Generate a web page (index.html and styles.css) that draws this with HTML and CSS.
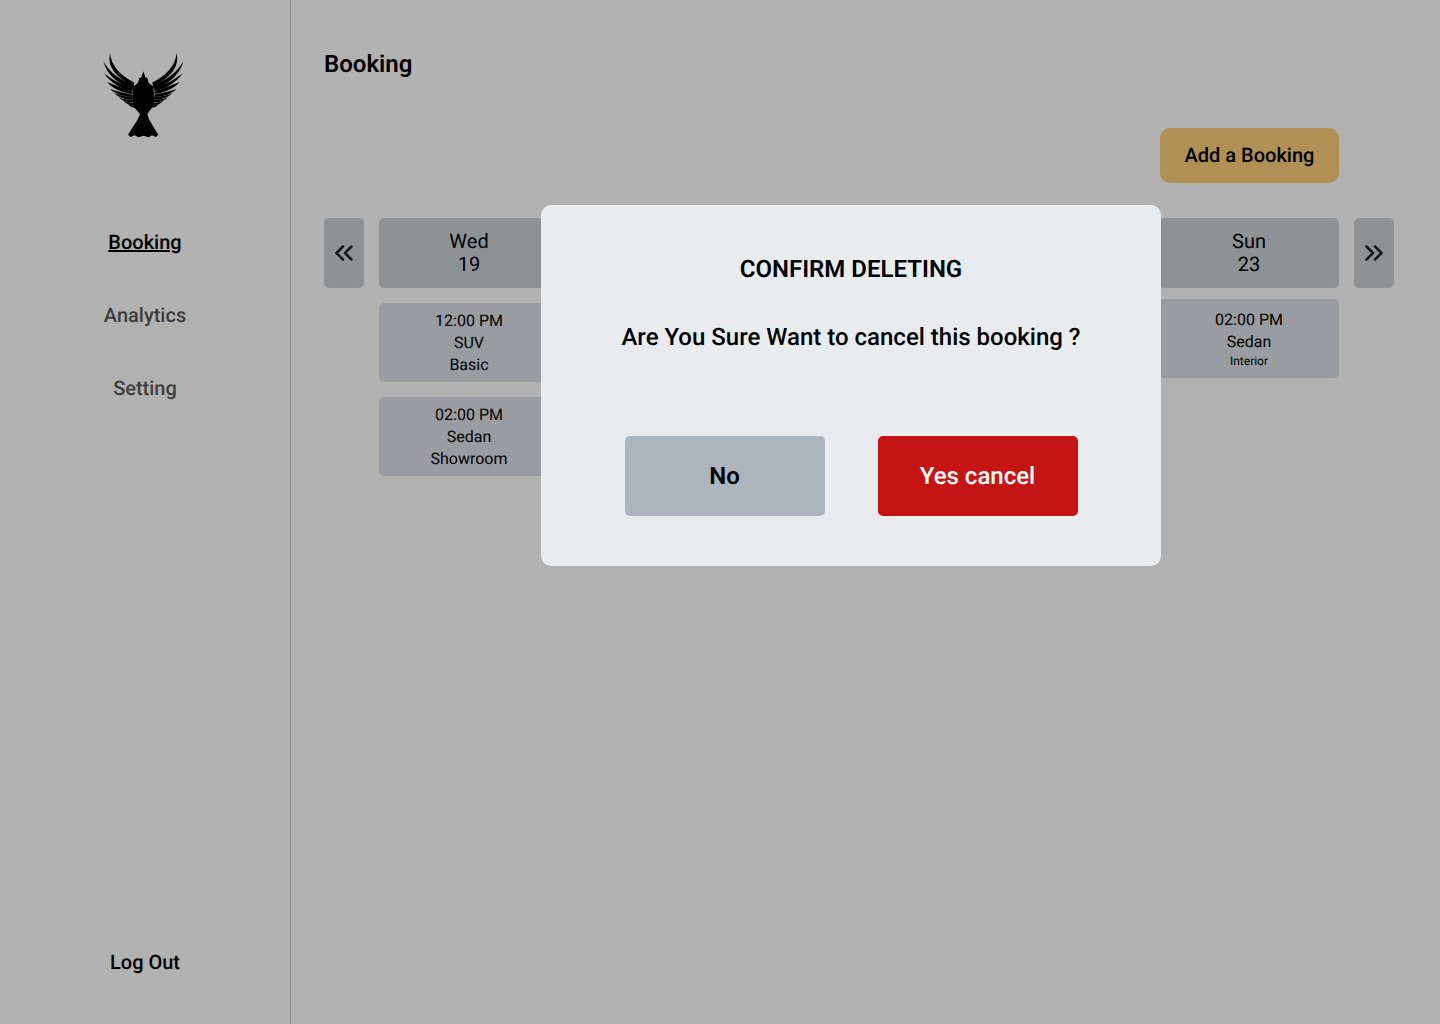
FILE: index.html
```html
<!DOCTYPE html>
<html lang="en">
<head>
    <meta charset="UTF-8">
    <meta name="viewport" content="width=device-width, initial-scale=1.0">
    <title>Booking</title>
    <link rel="stylesheet" href="styles.css">
</head>
<body>

    <div class="layout">
        <!-- Sidebar -->
        <aside class="sidebar">
            <svg class="logo" viewBox="0 0 330 330" aria-label="Logo">
                <!-- body and tail -->
                <path d="M160 94 L166 112 L172 114 L176 128 L190 140 L193 178 L188 200 L172 222 L178 240 L205 284 L198 291 L186 286 L176 292 L160 287 L146 292 L134 286 L122 291 L114 284 L142 240 L150 222 L134 204 L127 180 L128 142 L144 128 L148 114 L154 112 Z"/>
                <!-- left wing -->
                <g id="wing">
                    <path d="M60 40 C64 78 92 108 134 128 L130 138 C88 118 50 88 60 40 Z"/>
                    <path d="M40 64 C58 98 92 122 132 136 L129 148 C84 134 50 104 40 64 Z"/>
                    <path d="M42 99 C66 120 96 134 128 146 L126 154 C92 146 60 128 42 99 Z"/>
                    <path d="M51 126 C76 136 102 146 128 155 L126 162 C98 158 70 148 51 126 Z"/>
                    <path d="M60 147 C82 154 106 160 128 164 L126 171 C102 170 78 164 60 147 Z"/>
                    <path d="M72 160 C90 167 110 171 128 172 L127 179 C108 180 88 174 72 160 Z"/>
                    <path d="M85 172 C100 178 116 180 130 180 L129 187 C114 188 98 184 85 172 Z"/>
                    <path d="M100 182 C110 186 122 188 131 188 L132 195 C120 196 108 192 100 182 Z"/>
                    <path d="M113 191 C120 194 128 196 134 196 L136 203 C126 203 118 198 113 191 Z"/>
                </g>
                <!-- right wing -->
                <use href="#wing" transform="translate(320 0) scale(-1 1)"/>
            </svg>

            <nav class="nav">
                <a class="nav-link active" href="#">Booking</a>
                <a class="nav-link" href="#">Analytics</a>
                <a class="nav-link" href="#">Setting</a>
            </nav>

            <a class="logout" href="#">Log Out</a>
        </aside>

        <!-- Main content -->
        <main class="main">
            <h1 class="page-title">Booking</h1>

            <div class="toolbar">
                <button class="add-btn" type="button">Add a Booking</button>
            </div>

            <div class="calendar">
                <button class="arrow-btn" type="button" aria-label="Previous">
                    <svg viewBox="0 0 20 20"><path d="M9 3.500 L2.500 10 L9 16.500 M17.500 3.500 L11 10 L17.500 16.500"/></svg>
                </button>

                <div class="day">
                    <div class="day-head">Wed<br>19</div>
                    <div class="slot">12:00 PM<br>SUV<br>Basic</div>
                    <div class="slot">02:00 PM<br>Sedan<br>Showroom</div>
                </div>
                <!-- these three days sit behind the dialog -->
                <div class="day">
                    <div class="day-head"></div>
                </div>
                <div class="day">
                    <div class="day-head"></div>
                </div>
                <div class="day">
                    <div class="day-head"></div>
                </div>
                <div class="day day-tight">
                    <div class="day-head">Sun<br>23</div>
                    <div class="slot slot-tight">02:00 PM<br>Sedan<br><span class="slot-small">Interior</span></div>
                </div>

                <button class="arrow-btn" type="button" aria-label="Next">
                    <svg viewBox="0 0 20 20"><path d="M2.500 3.500 L9 10 L2.500 16.500 M11 3.500 L17.500 10 L11 16.500"/></svg>
                </button>
            </div>
        </main>
    </div>

    <!-- Confirm dialog -->
    <div class="overlay">
        <div class="modal">
            <h2 class="modal-title">CONFIRM DELETING</h2>
            <p class="modal-text">Are You Sure Want to cancel this booking ?</p>
            <div class="modal-actions">
                <button class="modal-btn btn-no" type="button">No</button>
                <button class="modal-btn btn-yes" type="button">Yes cancel</button>
            </div>
        </div>
    </div>

</body>
</html>
```

FILE: styles.css
```css
/* Page */
* {
    box-sizing: border-box;
}

body {
    margin: 0;
    font-family: Roboto, "Liberation Sans", sans-serif;
    color: #000;
    background: #fff;
    text-rendering: geometricPrecision;
}

button {
    font-family: inherit;
    text-rendering: inherit;
    border: none;
    cursor: pointer;
}

.layout {
    display: flex;
    height: 1024px;
    overflow: hidden;
}

/* Sidebar */
.sidebar {
    width: 291px;
    flex-shrink: 0;
    display: flex;
    flex-direction: column;
    align-items: center;
    padding-top: 40px;
    border-right: 1px solid #cbcbcb;
}

.logo {
    display: block;
    width: 110px;
    height: 110px;
    fill: #000;
}

.nav {
    display: flex;
    flex-direction: column;
    align-items: center;
    gap: 49px;
    margin-top: 80px;
}

.nav-link {
    font-size: 20px;
    line-height: 24px;
    font-weight: 500;
    color: #5a5a5a;
    text-decoration: none;
}

.nav-link.active {
    color: #000;
    text-decoration: underline;
}

.logout {
    margin-top: auto;
    margin-bottom: 50px;
    font-size: 20px;
    line-height: 24px;
    font-weight: 500;
    color: #000;
    text-decoration: none;
}

/* Main content */
.main {
    flex: 1;
    padding: 48px 46px 0 33px;
}

.page-title {
    margin: 0;
    font-size: 24px;
    line-height: 32px;
    font-weight: 600;
}

.toolbar {
    display: flex;
    justify-content: flex-end;
    margin-top: 48px;
    padding-right: 55px;
}

.add-btn {
    width: 179px;
    height: 55px;
    padding: 0 0 2px;
    border-radius: 10px;
    background: #fdcf79;
    font-size: 20px;
    font-weight: 500;
    color: #000;
}

/* Calendar row */
.calendar {
    display: flex;
    align-items: flex-start;
    gap: 15px;
    margin-top: 35px;
}

.arrow-btn {
    width: 40px;
    height: 70px;
    flex-shrink: 0;
    padding: 0;
    border-radius: 5px;
    background: #ccd1d6;
    display: flex;
    align-items: center;
    justify-content: center;
}

.arrow-btn svg {
    width: 20px;
    height: 20px;
    fill: none;
    stroke: #212529;
    stroke-width: 2.5;
    stroke-linecap: round;
    stroke-linejoin: round;
}

.day {
    width: 180px;
    flex-shrink: 0;
    display: flex;
    flex-direction: column;
    gap: 15px;
}

.day-tight {
    gap: 11px;
}

.day-head {
    height: 70px;
    padding-top: 12px;
    border-radius: 5px;
    background: #ccd1d6;
    text-align: center;
    font-size: 20px;
    line-height: 23px;
}

.slot {
    height: 79px;
    padding-top: 7px;
    border-radius: 5px;
    background: #dce0e5;
    text-align: center;
    font-size: 16px;
    line-height: 22px;
}

.slot-tight {
    padding-top: 10px;
}

.slot-small {
    display: block;
    font-size: 12px;
    line-height: 16px;
}

/* Dialog */
.overlay {
    position: fixed;
    inset: 0;
    padding: 205px 0 0 541px;
    background: rgba(0, 0, 0, 0.3);
}

.modal {
    width: 620px;
    height: 361px;
    padding-top: 50px;
    border-radius: 10px;
    background: #e8ecef;
    text-align: center;
}

.modal-title {
    margin: 0;
    font-size: 24px;
    line-height: 28px;
    font-weight: 600;
}

.modal-text {
    margin: 40px 0 0;
    font-size: 24px;
    line-height: 28px;
    font-weight: 500;
}

.modal-actions {
    display: flex;
    justify-content: center;
    gap: 53px;
    margin-top: 85px;
}

.modal-btn {
    width: 200px;
    height: 80px;
    border-radius: 5px;
    font-size: 24px;
    font-weight: 600;
}

.btn-no {
    background: #adb5bd;
    color: #000;
}

.btn-yes {
    background: #c51414;
    color: #fff;
    font-weight: 500;
}
```
